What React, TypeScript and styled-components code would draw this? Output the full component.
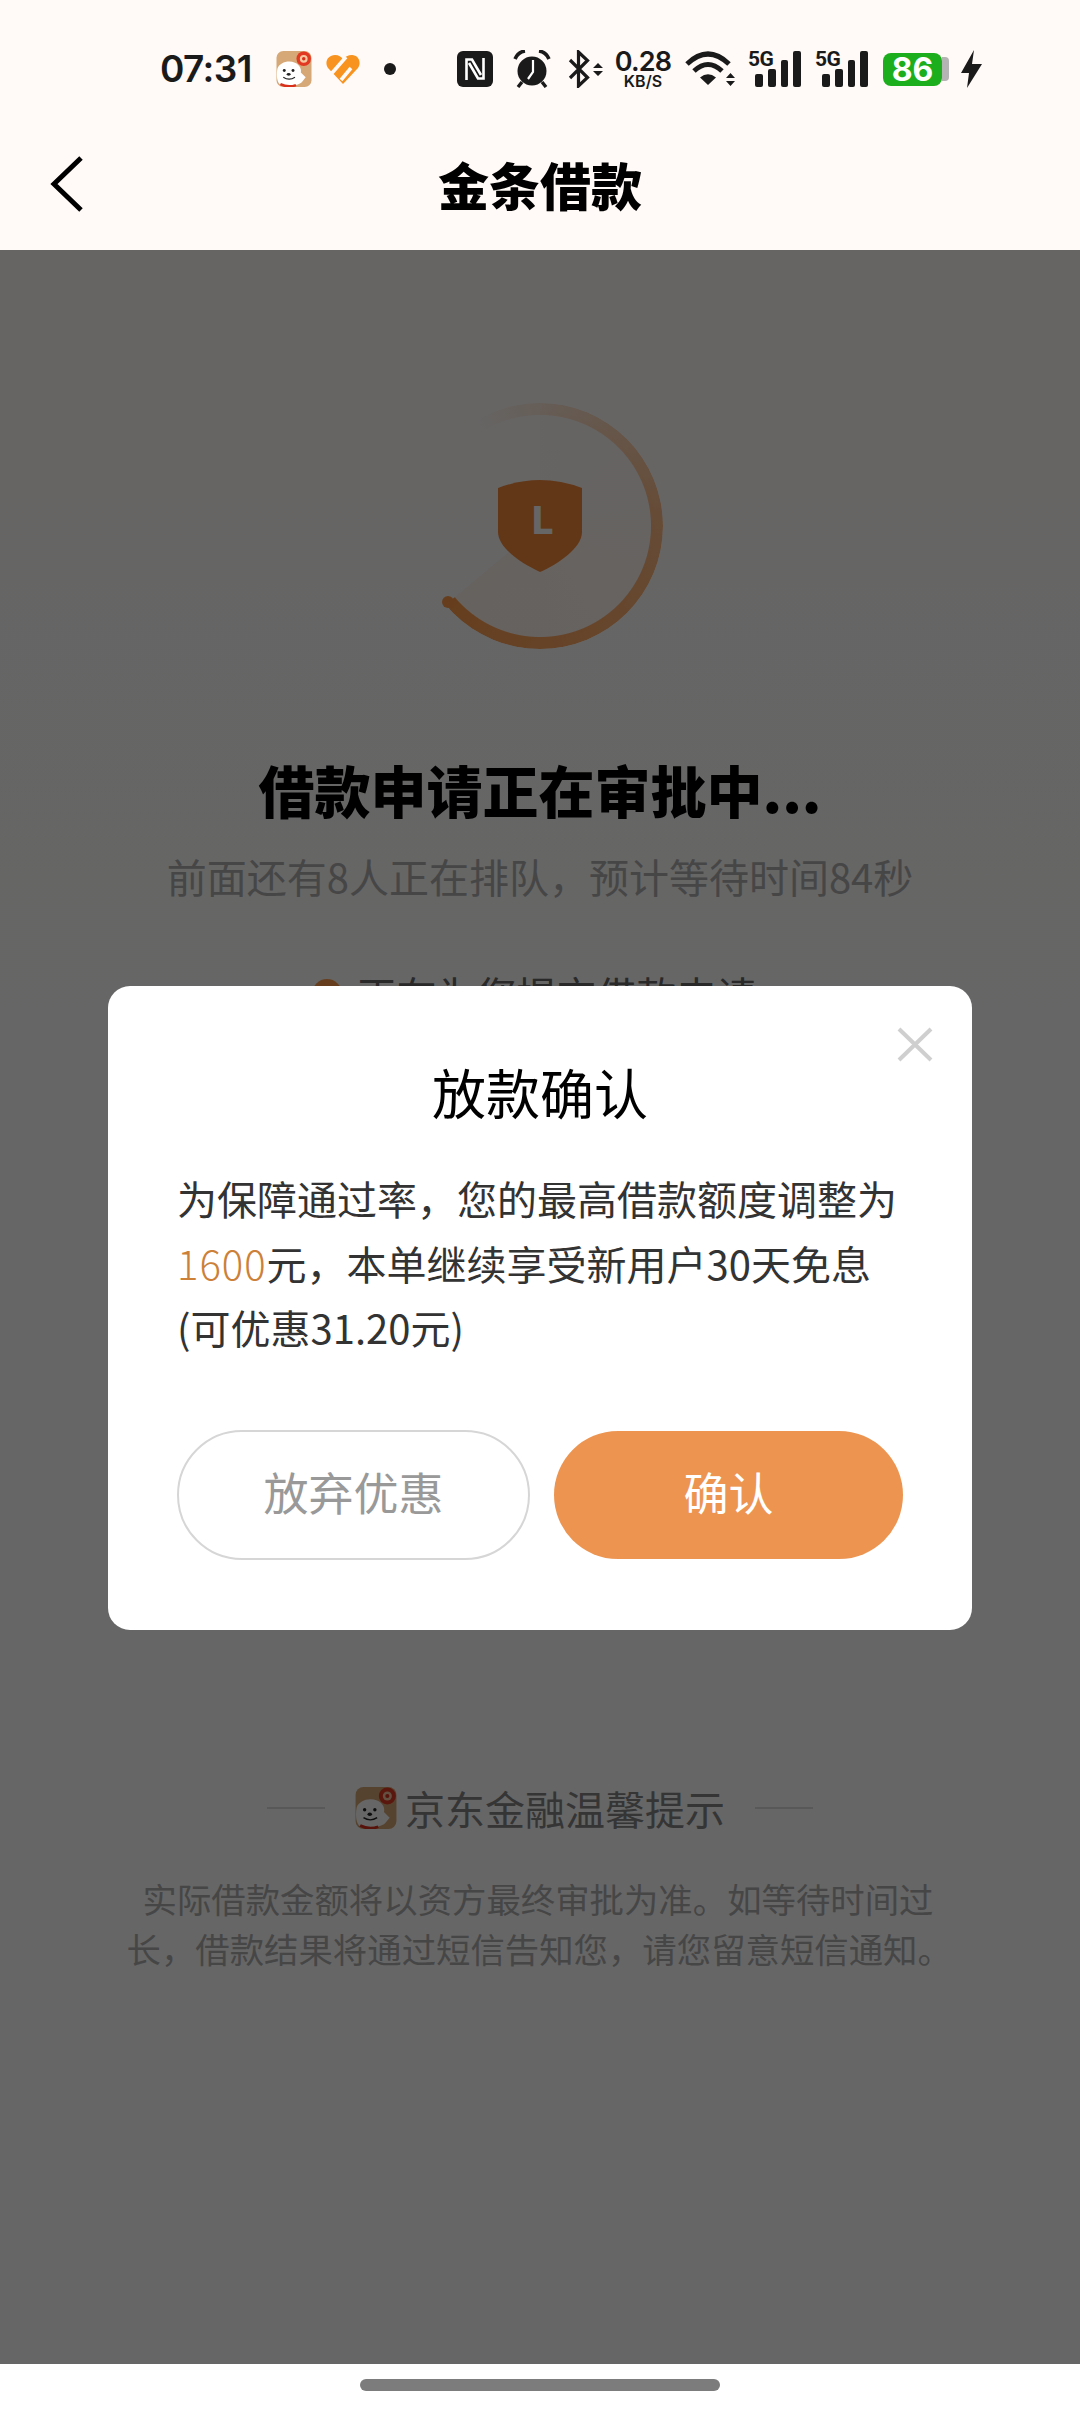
import styled, { createGlobalStyle } from 'styled-components';

const GlobalStyle = createGlobalStyle`
  html, body {
    margin: 0;
    padding: 0;
    background: #fff;
  }
  * {
    box-sizing: border-box;
  }
`;

const cjk = `"Noto Sans CJK SC", "Noto Sans", sans-serif`;

const Screen = styled.div`
  width: 1080px;
  height: 2412px;
  display: flex;
  flex-direction: column;
  overflow: hidden;
  font-family: ${cjk};
`;

const StatusBar = styled.div`
  height: 122px;
  flex: none;
  display: flex;
  align-items: center;
  padding: 50px 0 34px 160px;
  background: #fffaf7;
  color: #1a1a1a;
`;

const Slot = styled.span<{ $left: number }>`
  display: flex;
  align-items: center;
  flex: none;
  margin-left: ${({ $left }) => $left}px;
`;

const Clock = styled.span`
  font-family: Inter, sans-serif;
  font-size: 37px;
  font-weight: 600;
  line-height: 38px;
  width: 90px;
  letter-spacing: -0.6px;
`;

const Speed = styled.span`
  display: flex;
  flex-direction: column;
  align-items: center;
  width: 56px;
  height: 38px;
  font-family: Inter, sans-serif;
  font-weight: 600;
`;

const SpeedValue = styled.span`
  font-size: 27px;
  line-height: 24px;
  letter-spacing: -0.8px;
`;

const SpeedUnit = styled.span`
  font-size: 16px;
  line-height: 14px;
`;

const Signal = styled.span`
  position: relative;
  display: flex;
  align-items: flex-end;
  gap: 5px;
  width: 52px;
  height: 38px;
  padding: 0 0 1px 6px;
`;

const SignalLabel = styled.span`
  position: absolute;
  top: -1px;
  left: -1px;
  font-family: Roboto, sans-serif;
  font-size: 21px;
  font-weight: 700;
  line-height: 20px;
  letter-spacing: -0.5px;
`;

const SignalBar = styled.i<{ $height: number }>`
  display: block;
  width: 8px;
  height: ${({ $height }) => $height}px;
  border-radius: 2px;
  background: #1a1a1a;
`;

const Battery = styled.span`
  display: flex;
  align-items: center;
  justify-content: center;
  width: 59px;
  height: 33px;
  border-radius: 8px;
  background: #1cae1c;
  color: #fff;
  font-family: Inter, sans-serif;
  font-size: 32px;
  font-weight: 700;
  line-height: 33px;
`;

const BatteryCap = styled.span`
  width: 7px;
  height: 24px;
  border-radius: 0 4px 4px 0;
  background: #b4b4b4;
`;

const NavBar = styled.div`
  position: relative;
  height: 128px;
  flex: none;
  display: flex;
  align-items: center;
  justify-content: center;
  padding-bottom: 4px;
  background: #fffaf7;
`;

const BackButton = styled.button`
  position: absolute;
  left: 50px;
  top: 34px;
  display: flex;
  padding: 0;
  border: none;
  background: none;
`;

const NavTitle = styled.h1`
  margin: 0;
  font-size: 51px;
  font-weight: 900;
  line-height: 70px;
  color: #000;
`;

const Main = styled.div`
  position: relative;
  flex: 1;
  display: flex;
  flex-direction: column;
  align-items: center;
  padding-top: 153px;
  background: linear-gradient(180deg, #fffcfa 0%, #ffffff 45%);
`;

const Ring = styled.div`
  position: relative;
  width: 246px;
  height: 246px;
  display: flex;
  align-items: center;
  justify-content: center;
  flex: none;
`;

const RingSector = styled.div`
  position: absolute;
  inset: 8px;
  border-radius: 50%;
  background: conic-gradient(
    from 0deg,
    rgba(255, 160, 90, 0.02) 0deg,
    rgba(255, 160, 90, 0.09) 230deg,
    transparent 230.2deg
  );
`;

const RingStroke = styled.div`
  position: absolute;
  inset: 0;
  border-radius: 50%;
  background: conic-gradient(
    from -32deg,
    rgba(255, 165, 95, 0) 0deg,
    rgba(255, 165, 95, 0.75) 120deg,
    #ff9c4c 262deg,
    transparent 262.2deg
  );
  mask: radial-gradient(farthest-side, transparent calc(100% - 12.5px), #000 calc(100% - 11.5px));
`;

const RingCap = styled.div`
  position: absolute;
  left: 25px;
  top: 193px;
  width: 12px;
  height: 12px;
  border-radius: 50%;
  background: #ff9c4c;
`;

const Heading = styled.h2`
  margin: 100px 0 0;
  font-size: 56px;
  font-weight: 900;
  line-height: 80px;
  color: #000;
`;

const SubHeading = styled.p`
  margin: 19px 0 0;
  font-size: 40px;
  line-height: 56px;
  color: #b0b0b0;
`;

const StepRow = styled.div`
  display: flex;
  align-items: center;
  gap: 15px;
  margin: 62px 12px 0 0;
  font-size: 40px;
  line-height: 56px;
  color: #666;
`;

const StepDot = styled.span`
  width: 30px;
  height: 30px;
  border-radius: 50%;
  background: #ff9c4c;
`;

const TipsHeader = styled.div`
  display: flex;
  align-items: center;
  margin-top: 758px;
  font-size: 40px;
  line-height: 56px;
  color: #848484;
`;

const TipsRule = styled.span<{ $side: 'left' | 'right' }>`
  width: 58px;
  height: 2px;
  background: #dcdcdc;
  margin: ${({ $side }) => ($side === 'left' ? '0 30px 0 0' : '0 0 0 30px')};
`;

const TipsTitle = styled.span`
  margin-left: 8px;
`;

const TipsBody = styled.p`
  width: 827px;
  margin: 37px 0 0;
  font-size: 34.4px;
  line-height: 50px;
  text-indent: 16px;
  color: #b0b0b0;
`;

const Scrim = styled.div`
  position: absolute;
  inset: 0;
  display: flex;
  justify-content: center;
  align-items: flex-start;
  background: rgba(0, 0, 0, 0.6);
`;

const Modal = styled.div`
  position: relative;
  width: 864px;
  margin-top: 736px;
  padding: 70px 69px;
  border-radius: 22px;
  background: #fff;
`;

const CloseButton = styled.button`
  position: absolute;
  top: 41px;
  right: 39px;
  display: flex;
  padding: 0;
  border: none;
  background: none;
`;

const ModalTitle = styled.h3`
  margin: 0;
  font-size: 54px;
  font-weight: 400;
  line-height: 72px;
  text-align: center;
  color: #000;
`;

const ModalText = styled.p`
  margin: 38px 0 0;
  font-size: 40px;
  line-height: 64.5px;
  color: #333;
`;

const Amount = styled.span`
  color: #cc8038;
  font-weight: 300;
  letter-spacing: 1px;
`;

const ButtonRow = styled.div`
  display: flex;
  align-items: center;
  gap: 24px;
  margin-top: 70px;
`;

const PillButton = styled.button<{ $primary?: boolean }>`
  flex: 1;
  height: ${({ $primary }) => ($primary ? 128 : 130)}px;
  border-radius: 65px;
  border: ${({ $primary }) => ($primary ? 'none' : '2px solid #d6d6d6')};
  background: ${({ $primary }) => ($primary ? '#ec9450' : '#fff')};
  color: ${({ $primary }) => ($primary ? '#fff' : '#999')};
  font-family: ${cjk};
  font-size: 45px;
  line-height: 60px;
  padding: 0 0 5px;
`;

const HomeBar = styled.div`
  height: 48px;
  flex: none;
  display: flex;
  justify-content: center;
  padding-top: 15px;
  background: #fff;
`;

const HomePill = styled.div`
  width: 360px;
  height: 12px;
  border-radius: 6px;
  background: #7c7c7c;
`;

const JoyLogo = ({ size = 36 }: { size?: number }) => (
  <svg width={size} height={size} viewBox="0 0 36 37">
    <rect x="0" y="0" width="36" height="37" rx="7" fill="#d7a877" />
    <circle cx="28" cy="8" r="7.5" fill="#e23a22" />
    <circle cx="28" cy="8" r="4" fill="#f7c9a0" />
    <circle cx="28" cy="8" r="1.8" fill="#d9301c" />
    <path
      d="M1 18 C3 12 12 9 19 12 C24 14 26 19 25 22 L30 27 L26 32 C22 36 8 37 3 34 C0 30 0 23 1 18 Z"
      fill="#fff"
    />
    <circle cx="8" cy="20" r="1.5" fill="#222" />
    <circle cx="17" cy="20" r="1.5" fill="#222" />
    <ellipse cx="12.5" cy="24" rx="2" ry="1.5" fill="#222" />
    <path d="M7 27 Q13 31 19 27" stroke="#222" strokeWidth="1.2" fill="none" />
    <path d="M4 34 Q12 38 20 35" stroke="#d9301c" strokeWidth="2.5" fill="none" />
  </svg>
);

const HeartIcon = () => (
  <svg width="34" height="30" viewBox="0 0 34 30">
    <path
      d="M17 30 L2 14 C-2 8 2 1 9 1 C13 1 15 3 17 5 C19 3 22 1 26 1 C32 1 36 8 32 14 Z"
      fill="#f7931e"
    />
    <path d="M6 19 L20 3" stroke="#fffaf7" strokeWidth="3.6" fill="none" />
    <path d="M15 26 L25 14" stroke="#fffaf7" strokeWidth="3.6" fill="none" />
  </svg>
);

const NfcIcon = () => (
  <svg width="36" height="36" viewBox="0 0 36 36">
    <rect width="36" height="36" rx="6" fill="#1a1a1a" />
    <path d="M9.5 29 V8.5 H15 L24 24" stroke="#fff" strokeWidth="2.6" fill="none" />
    <path d="M26.5 7 V27.5 H21 L12 12" stroke="#fff" strokeWidth="2.6" fill="none" />
  </svg>
);

const AlarmIcon = () => (
  <svg width="38" height="38" viewBox="0 0 38 38">
    <circle cx="19" cy="21" r="14.5" fill="#1a1a1a" />
    <path d="M2 9 Q5 2 12 1" stroke="#1a1a1a" strokeWidth="3.6" fill="none" />
    <path d="M36 9 Q33 2 26 1" stroke="#1a1a1a" strokeWidth="3.6" fill="none" />
    <path d="M9 32 L5 37 M29 32 L33 37" stroke="#1a1a1a" strokeWidth="3.4" />
    <path d="M20 10 V22 L15 29" stroke="#fff" strokeWidth="2.2" fill="none" />
  </svg>
);

const BluetoothIcon = () => (
  <svg width="35" height="38" viewBox="0 0 35 38">
    <path d="M2 10 L19.5 27.5 L10.5 36 V2 L19.5 10.5 L2 28" stroke="#1a1a1a" strokeWidth="3.2" fill="none" />
    <path d="M30 13 L35 18 H25 Z M25 21 H35 L30 26 Z" fill="#1a1a1a" />
  </svg>
);

const WifiIcon = () => (
  <svg width="52" height="38" viewBox="0 0 52 38">
    <path d="M2 14 Q23 -6 44 14" stroke="#1a1a1a" strokeWidth="5" fill="none" />
    <path d="M9 21 Q23 8 37 21" stroke="#1a1a1a" strokeWidth="5" fill="none" />
    <path d="M23 35 L15 27.5 Q23 21 31 27.5 Z" fill="#1a1a1a" />
    <path d="M45.5 23 L50 28 H41 Z M41 31 H50 L45.5 36 Z" fill="#1a1a1a" />
  </svg>
);

const BoltIcon = () => (
  <svg width="21" height="38" viewBox="0 0 21 38">
    <path d="M13 0 L0 23 H8 L6 38 L21 14 H11 Z" fill="#1a1a1a" />
  </svg>
);

const DotIcon = () => (
  <svg width="12" height="12" viewBox="0 0 12 12">
    <circle cx="6" cy="6" r="6" fill="#1a1a1a" />
  </svg>
);

const ShieldSvg = styled.svg`
  position: relative;
`;

const ShieldIcon = () => (
  <ShieldSvg width="84" height="92" viewBox="0 0 84 92">
    <path d="M0 8 Q42 -8 84 8 V52 C84 68 60 84 42 92 C24 84 0 68 0 52 Z" fill="#f58a3c" />
    <text x="34" y="54" fontFamily="Inter, sans-serif" fontSize="38" fontWeight="800" fill="#fff">
      L
    </text>
  </ShieldSvg>
);

const ChevronIcon = () => (
  <svg width="34" height="56" viewBox="0 0 34 56">
    <path d="M31 2 L4 28 L31 54" stroke="#000" strokeWidth="5" fill="none" />
  </svg>
);

const CloseIcon = () => (
  <svg width="36" height="35" viewBox="0 0 36 35">
    <path d="M2 2 L34 33 M34 2 L2 33" stroke="#cfcfcf" strokeWidth="4" fill="none" />
  </svg>
);

const SignalIcon = () => (
  <Signal>
    <SignalLabel>5G</SignalLabel>
    <SignalBar $height={13} />
    <SignalBar $height={18} />
    <SignalBar $height={27} />
    <SignalBar $height={36} />
  </Signal>
);

export default function App() {
  return (
    <Screen>
      <GlobalStyle />
      <StatusBar>
        <Clock>07:31</Clock>
        <Slot $left={26}>
          <JoyLogo />
        </Slot>
        <Slot $left={14}>
          <HeartIcon />
        </Slot>
        <Slot $left={24}>
          <DotIcon />
        </Slot>
        <Slot $left={61}>
          <NfcIcon />
        </Slot>
        <Slot $left={20}>
          <AlarmIcon />
        </Slot>
        <Slot $left={17}>
          <BluetoothIcon />
        </Slot>
        <Slot $left={12}>
          <Speed>
            <SpeedValue>0.28</SpeedValue>
            <SpeedUnit>KB/S</SpeedUnit>
          </Speed>
        </Slot>
        <Slot $left={14}>
          <WifiIcon />
        </Slot>
        <Slot $left={12}>
          <SignalIcon />
        </Slot>
        <Slot $left={15}>
          <SignalIcon />
        </Slot>
        <Slot $left={15}>
          <Battery>86</Battery>
          <BatteryCap />
        </Slot>
        <Slot $left={12}>
          <BoltIcon />
        </Slot>
      </StatusBar>

      <NavBar>
        <BackButton>
          <ChevronIcon />
        </BackButton>
        <NavTitle>金条借款</NavTitle>
      </NavBar>

      <Main>
        <Ring>
          <RingSector />
          <RingStroke />
          <RingCap />
          <ShieldIcon />
        </Ring>
        <Heading>借款申请正在审批中...</Heading>
        <SubHeading>前面还有8人正在排队，预计等待时间84秒</SubHeading>
        <StepRow>
          <StepDot />
          正在为您提交借款申请
        </StepRow>
        <TipsHeader>
          <TipsRule $side="left" />
          <JoyLogo size={42} />
          <TipsTitle>京东金融温馨提示</TipsTitle>
          <TipsRule $side="right" />
        </TipsHeader>
        <TipsBody>实际借款金额将以资方最终审批为准。如等待时间过长，借款结果将通过短信告知您，请您留意短信通知。</TipsBody>

        <Scrim>
          <Modal>
            <CloseButton>
              <CloseIcon />
            </CloseButton>
            <ModalTitle>放款确认</ModalTitle>
            <ModalText>
              为保障通过率，您的最高借款额度调整为
              <Amount>1600</Amount>元，本单继续享受新用户30天免息(可优惠31.20元)
            </ModalText>
            <ButtonRow>
              <PillButton>放弃优惠</PillButton>
              <PillButton $primary>确认</PillButton>
            </ButtonRow>
          </Modal>
        </Scrim>
      </Main>

      <HomeBar>
        <HomePill />
      </HomeBar>
    </Screen>
  );
}
